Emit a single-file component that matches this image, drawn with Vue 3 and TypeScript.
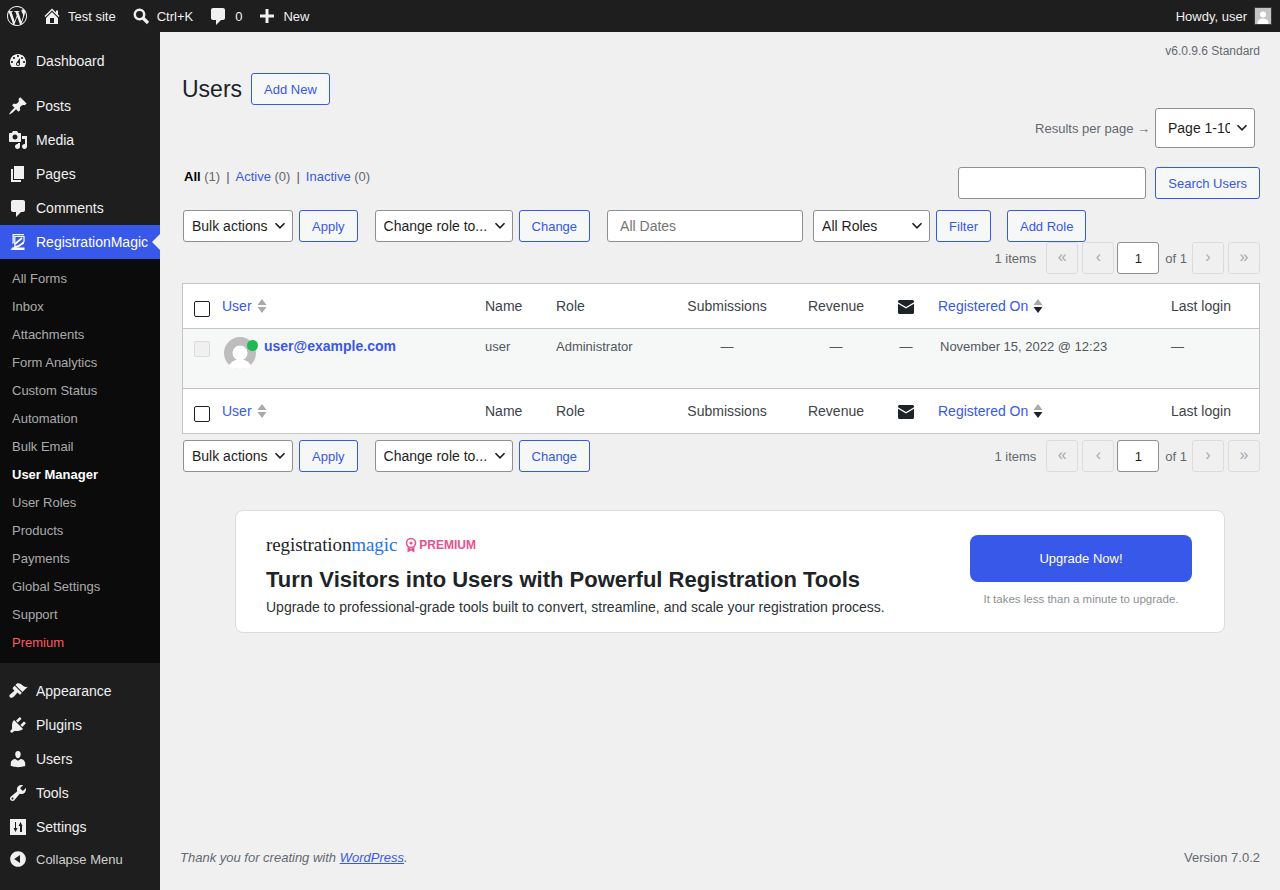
<template>
  <div class="page">
    <header class="adminbar">
      <svg class="wp-logo" viewBox="0 0 24 24"><path :d="icons.wp" /></svg>
      <a class="bar-item home"><svg viewBox="0 0 20 20"><path :d="icons.home" /></svg>Test site</a>
      <a class="bar-item search">
        <svg viewBox="0 0 20 20"><circle cx="8.5" cy="8.5" r="4.7" fill="none" stroke="currentColor" stroke-width="2.5" /><path d="M12 12l5 5" stroke="currentColor" stroke-width="3.2" /></svg>
        Ctrl+K
      </a>
      <a class="bar-item comments"><svg viewBox="0 0 20 20"><path :d="icons.comment" /></svg>0</a>
      <a class="bar-item new"><svg viewBox="0 0 20 20"><path d="M8.5 3h3v5.5H17v3h-5.500V17h-3v-5.500H3v-3h5.500z" /></svg>New</a>
      <div class="howdy">
        Howdy, user
        <span class="bar-avatar"><svg viewBox="0 0 16 16"><rect width="16" height="16" fill="#c4c4c4" /><circle cx="8" cy="6.500" r="3" fill="#fff" /><ellipse cx="8" cy="14.500" rx="5.500" ry="4" fill="#fff" /></svg></span>
      </div>
    </header>

    <div class="body-row">
      <aside class="sidebar">
        <ul class="menu">
          <li v-for="item in menuTop" :key="item.label" class="menu-item" :class="{ spaced: item.spaced }">
            <svg viewBox="0 0 20 20"><path fill-rule="evenodd" :d="item.icon" /></svg>{{ item.label }}
          </li>
          <li class="menu-item active">
            <svg viewBox="0 0 20 20">
              <path d="M4.500 2h11.500v1.300H5.800v7.700L4.500 12.300z" />
              <path d="M6.800 4.500H16v5l-5 4.800H6.800z" fill="none" stroke="#fff" stroke-width="1.200" />
              <path d="M2 17.500l14-7.500v1.800L5.500 17.500z" />
              <path d="M4 15.500h12.500V18H3.500z" />
              <path d="M7 12l7-6" stroke="#fff" stroke-width="1.800" />
            </svg>
            RegistrationMagic
          </li>
          <li class="submenu">
            <a v-for="sub in submenu" :key="sub" :class="{ current: sub === 'User Manager', premium: sub === 'Premium' }">{{ sub }}</a>
          </li>
          <li v-for="item in menuBottom" :key="item.label" class="menu-item" :class="{ spaced: item.spaced }">
            <svg viewBox="0 0 20 20"><path fill-rule="evenodd" :d="item.icon" /></svg>{{ item.label }}
          </li>
          <li class="menu-item collapse">
            <svg viewBox="0 0 20 20"><path fill-rule="evenodd" :d="icons.collapse" /></svg>Collapse Menu
          </li>
        </ul>
      </aside>

      <main class="content">
        <div class="wrap">
          <p class="version">v6.0.9.6 Standard</p>

          <div class="title-row">
            <h1>Users</h1>
            <button class="btn">Add New</button>
          </div>

          <div class="per-page">
            <span>Results per page →</span>
            <select class="field page-select"><option>Page 1-10</option></select>
          </div>

          <div class="filter-row">
            <ul class="subsubsub">
              <li><b>All</b> (1)</li>
              <li class="sep">|</li>
              <li><a>Active</a> (0)</li>
              <li class="sep">|</li>
              <li><a>Inactive</a> (0)</li>
            </ul>
            <div class="search-box">
              <input class="field search-input" type="text" />
              <button class="btn">Search Users</button>
            </div>
          </div>

          <div class="actions top">
            <select class="field bulk"><option>Bulk actions</option></select>
            <button class="btn apply">Apply</button>
            <select class="field role"><option>Change role to...</option></select>
            <button class="btn change">Change</button>
            <input class="field date" type="text" placeholder="All Dates" />
            <select class="field roles"><option>All Roles</option></select>
            <button class="btn filter">Filter</button>
            <button class="btn add-role">Add Role</button>
          </div>

          <div class="pager-row">
            <div class="pager">
              <span class="count">1 items</span>
              <span class="pg first">«</span>
              <span class="pg prev">‹</span>
              <input class="field pg-input" type="text" value="1" />
              <span class="of">of 1</span>
              <span class="pg next">›</span>
              <span class="pg">»</span>
            </div>
          </div>

          <table class="users">
            <colgroup>
              <col style="width: 29px" />
              <col style="width: 263px" />
              <col style="width: 71px" />
              <col style="width: 131px" />
              <col style="width: 100px" />
              <col style="width: 118px" />
              <col style="width: 22px" />
              <col style="width: 244px" />
              <col />
            </colgroup>
            <thead>
              <tr>
                <th class="cb"><input type="checkbox" class="check" /></th>
                <th><a>User</a><svg class="sort" viewBox="0 0 10 16"><path d="M5 1l4.500 6h-9z" fill="#a7aaad" /><path d="M5 15l4.500-6h-9z" fill="#a7aaad" /></svg></th>
                <th>Name</th>
                <th>Role</th>
                <th class="center">Submissions</th>
                <th class="center">Revenue</th>
                <th class="center mail"><svg viewBox="0 0 16 14"><path :d="icons.mail" /></svg></th>
                <th class="reg"><a>Registered On</a><svg class="sort" viewBox="0 0 10 16"><path d="M5 1l4.500 6h-9z" fill="#a7aaad" /><path d="M5 15l4.500-6h-9z" fill="#1d2327" /></svg></th>
                <th>Last login</th>
              </tr>
            </thead>
            <tbody>
              <tr class="user-row">
                <td class="cb"><input type="checkbox" class="check dim" disabled /></td>
                <td class="user-cell">
                  <span class="avatar">
                    <svg viewBox="0 0 32 32"><circle cx="16" cy="16" r="16" fill="#bdbdbd" /><circle cx="16" cy="16" r="7.500" fill="#fff" /><path d="M5 29c2-5 6-6.500 11-6.500S25 24 27 29c-3 2-7 3-11 3s-8-1-11-3z" fill="#fff" /></svg>
                    <i class="online"></i>
                  </span>
                  <a class="email">user@example.com</a>
                </td>
                <td>user</td>
                <td>Administrator</td>
                <td class="center">—</td>
                <td class="center">—</td>
                <td class="center">—</td>
                <td class="reg-date">November 15, 2022 @ 12:23</td>
                <td>—</td>
              </tr>
            </tbody>
            <tfoot>
              <tr>
                <th class="cb"><input type="checkbox" class="check" /></th>
                <th><a>User</a><svg class="sort" viewBox="0 0 10 16"><path d="M5 1l4.500 6h-9z" fill="#a7aaad" /><path d="M5 15l4.500-6h-9z" fill="#a7aaad" /></svg></th>
                <th>Name</th>
                <th>Role</th>
                <th class="center">Submissions</th>
                <th class="center">Revenue</th>
                <th class="center mail"><svg viewBox="0 0 16 14"><path :d="icons.mail" /></svg></th>
                <th class="reg"><a>Registered On</a><svg class="sort" viewBox="0 0 10 16"><path d="M5 1l4.500 6h-9z" fill="#a7aaad" /><path d="M5 15l4.500-6h-9z" fill="#1d2327" /></svg></th>
                <th>Last login</th>
              </tr>
            </tfoot>
          </table>

          <div class="actions bottom">
            <select class="field bulk"><option>Bulk actions</option></select>
            <button class="btn apply">Apply</button>
            <select class="field role"><option>Change role to...</option></select>
            <button class="btn change">Change</button>
            <div class="pager">
              <span class="count">1 items</span>
              <span class="pg first">«</span>
              <span class="pg prev">‹</span>
              <input class="field pg-input" type="text" value="1" />
              <span class="of">of 1</span>
              <span class="pg next">›</span>
              <span class="pg">»</span>
            </div>
          </div>

          <section class="promo">
            <div class="promo-text">
              <div class="brand">
                <span class="wordmark">registration<em>magic</em></span>
                <svg class="ribbon" viewBox="0 0 12 16"><circle cx="6" cy="6" r="4.500" fill="none" stroke="#e8518d" stroke-width="1.600" /><circle cx="6" cy="6" r="1.600" fill="#e8518d" /><path d="M2.500 10v5.500L6 13.500l3.500 2V10L6 12z" fill="#e8518d" /></svg>
                <span class="tier">PREMIUM</span>
              </div>
              <h2>Turn Visitors into Users with Powerful Registration Tools</h2>
              <p>Upgrade to professional-grade tools built to convert, streamline, and scale your registration process.</p>
            </div>
            <div class="promo-cta">
              <button class="upgrade">Upgrade Now!</button>
              <small>It takes less than a minute to upgrade.</small>
            </div>
          </section>
        </div>

        <footer class="foot">
          <span class="thanks">Thank you for creating with <a>WordPress</a>.</span>
          <span>Version 7.0.2</span>
        </footer>
      </main>
    </div>
  </div>
</template>

<script setup lang="ts">
interface MenuItem {
  label: string
  icon: string
  spaced?: boolean
}

const icons = {
  wp: 'M12 2C6.486 2 2 6.486 2 12s4.486 10 10 10 10-4.486 10-10S17.514 2 12 2zM3.009 12c0-1.303.28-2.54.778-3.658l4.287 11.745A8.993 8.993 0 013.009 12zm8.991 8.991c-.883 0-1.735-.13-2.54-.367l2.698-7.84 2.763 7.572c.018.044.04.085.064.124a8.95 8.95 0 01-2.985.511zm1.24-13.207c.541-.028 1.029-.085 1.029-.085.484-.057.427-.769-.057-.741 0 0-1.456.114-2.396.114-.883 0-2.368-.114-2.368-.114-.485-.028-.541.712-.057.741 0 0 .459.057.943.085l1.4 3.838-1.968 5.9-3.274-9.738c.542-.028 1.029-.085 1.029-.085.484-.057.427-.769-.057-.741 0 0-1.456.114-2.396.114-.169 0-.368-.004-.58-.011A8.98 8.98 0 0112 3.009c2.341 0 4.472.895 6.071 2.36-.039-.002-.076-.007-.117-.007-.883 0-1.51.769-1.51 1.596 0 .741.427 1.368.883 2.109.342.599.741 1.368.741 2.479 0 .769-.296 1.662-.684 2.905l-.897 2.996-3.247-9.663zm3.279 11.985l2.745-7.936c.513-1.282.684-2.307.684-3.219 0-.331-.022-.638-.061-.924A8.96 8.96 0 0120.991 12a8.987 8.987 0 01-4.472 7.769z',
  home: 'M16 8.500l1.530 1.530-1.060 1.060L10 4.620l-6.470 6.470-1.060-1.060L10 2.500l4 4v-2h2v4zm-6-2.460l6 5.990V18H4v-5.970zM12 17v-5H8v5h4z',
  comment: 'M5 2h10c1.100 0 2 .9 2 2v8c0 1.100-.9 2-2 2h-2l-5 5v-5H5c-1.100 0-2-.9-2-2V4c0-1.100.9-2 2-2z',
  collapse: 'M10 2.160c4.330 0 7.840 3.510 7.840 7.840s-3.510 7.840-7.840 7.840S2.160 14.330 2.160 10 5.710 2.160 10 2.160zm2 11.720V6.120L6.180 9.970z',
  mail: 'M1.500 0h13c.8 0 1.500.7 1.500 1.500v.8L8 7 0 2.300v-.8C0 .7.700 0 1.500 0zM0 3.800l8 4.700 8-4.700v8.700c0 .8-.7 1.500-1.500 1.500h-13C.7 14 0 13.300 0 12.500z',
}

const menuTop: MenuItem[] = [
  { label: 'Dashboard', icon: 'M3.760 16h12.480c1.100-1.370 1.760-3.110 1.760-5 0-4.420-3.580-8-8-8s-8 3.580-8 8c0 1.890.660 3.630 1.760 5zM10 4c.550 0 1 .450 1 1s-.450 1-1 1-1-.450-1-1 .450-1 1-1zM6 6c.550 0 1 .450 1 1s-.450 1-1 1-1-.450-1-1 .450-1 1-1zm8 0c.550 0 1 .450 1 1s-.450 1-1 1-1-.450-1-1 .450-1 1-1zm-5.370 5.550L12 7v6c0 1.100-.9 2-2 2s-2-.9-2-2c0-.570.240-1.080.630-1.450zM4 10c.550 0 1 .450 1 1s-.450 1-1 1-1-.450-1-1 .450-1 1-1zm12 0c.550 0 1 .450 1 1s-.450 1-1 1-1-.450-1-1 .450-1 1-1zm-5 3c0-.550-.450-1-1-1s-1 .450-1 1 .450 1 1 1 1-.450 1-1z' },
  { label: 'Posts', spaced: true, icon: 'M10.440 3.020l1.820-1.820 6.360 6.350-1.830 1.820c-1.050-.680-2.480-.570-3.410.360l-.750.750c-.920.930-1.040 2.350-.350 3.410l-1.830 1.820-2.410-2.410-2.800 2.790c-.420.420-3.380 2.710-3.800 2.290s1.860-3.390 2.280-3.810l2.790-2.790L4.100 9.360l1.830-1.820c1.050.690 2.480.570 3.400-.360l.750-.750c.930-.920 1.050-2.350.360-3.410z' },
  { label: 'Media', icon: 'M13 11V4c0-.550-.450-1-1-1h-1.670L9 1H5L3.670 3H2c-.550 0-1 .450-1 1v7c0 .550.450 1 1 1h10c.550 0 1-.450 1-1zM7 4.500c1.380 0 2.500 1.120 2.500 2.500S8.380 9.500 7 9.500 4.500 8.380 4.500 7 5.620 4.500 7 4.500zM14 6h5v10.500c0 1.380-1.120 2.500-2.500 2.500S14 17.880 14 16.500s1.120-2.500 2.500-2.500c.170 0 .340.020.500.050V9h-3V6zm-4 8.050V13h2v3.500c0 1.380-1.120 2.500-2.500 2.500S7 17.880 7 16.500 8.120 14 9.500 14c.170 0 .340.020.500.050z' },
  { label: 'Pages', icon: 'M6 15V2h10v13H6zm-1 1h8v2H3V5h2v11z' },
  { label: 'Comments', icon: 'M5 2h10c1.100 0 2 .9 2 2v8c0 1.100-.9 2-2 2h-2l-5 5v-5H5c-1.100 0-2-.9-2-2V4c0-1.100.9-2 2-2z' },
]

const submenu: string[] = [
  'All Forms', 'Inbox', 'Attachments', 'Form Analytics', 'Custom Status', 'Automation', 'Bulk Email',
  'User Manager', 'User Roles', 'Products', 'Payments', 'Global Settings', 'Support', 'Premium',
]

const menuBottom: MenuItem[] = [
  { label: 'Appearance', spaced: true, icon: 'M14.480 11.060L7.410 3.990l1.500-1.500c.500-.560 2.300-.470 3.510.320 1.210.800 1.430 1.280 2.910 2.100 1.180.640 2.450 1.260 4.450.850zm-.710.710L6.700 4.700 4.930 6.470c-.390.390-.390 1.020 0 1.410l1.060 1.060c.390.390.390 1.030 0 1.420-.6.600-1.430 1.110-2.210 1.690-.350.260-.7.530-1.010.840C1.430 13.230.780 15.060 1.950 16.230c1.180 1.170 3 .520 4.340-.880.310-.310.580-.660.840-1.010.580-.780 1.090-1.610 1.690-2.210.390-.390 1.020-.390 1.410 0l1.060 1.060c.390.390 1.020.390 1.410 0z' },
  { label: 'Plugins', icon: 'M13.110 4.360L9.870 7.600 8 5.730l3.240-3.240c.350-.340 1.050-.2 1.560.320.520.510.660 1.210.310 1.550zm-8 1.770l.910-1.120 9.010 9.010-1.190.840c-.710.710-2.630 1.160-3.820 1.160H6.140L4.900 17.260c-.590.590-1.540.590-2.120 0-.590-.580-.590-1.530 0-2.120l1.240-1.240v-3.880c0-1.130.400-3.190 1.090-3.890zm7.260 3.970l3.240-3.240c.340-.350 1.040-.210 1.550.310.520.510.660 1.210.310 1.550l-3.240 3.250z' },
  { label: 'Users', icon: 'M10 9.250c-2.270 0-2.730-3.440-2.730-3.440C7 4.020 7.820 2 9.970 2c2.160 0 2.980 2.020 2.710 3.810 0 0-.410 3.440-2.680 3.440zm0 2.570L12.720 10c2.390 0 4.520 2.330 4.520 4.530v2.490s-3.650 1.130-7.240 1.130c-3.650 0-7.240-1.130-7.240-1.130v-2.490c0-2.250 1.940-4.480 4.470-4.480z' },
  { label: 'Tools', icon: 'M16.680 9.770c-1.340 1.340-3.300 1.670-4.950.990l-5.410 6.520c-.990.990-2.590.990-3.580 0s-.990-2.590 0-3.570l6.520-5.420c-.680-1.650-.350-3.610.990-4.950 1.280-1.280 3.120-1.620 4.720-1.060l-2.890 2.890 2.820 2.820 2.860-2.870c.530 1.580.180 3.390-1.080 4.650zM3.810 16.210c.400.390 1.040.390 1.430 0 .400-.400.400-1.040 0-1.430-.390-.400-1.030-.400-1.430 0-.390.390-.390 1.030 0 1.430z' },
  { label: 'Settings', icon: 'M2 2h16v16H2zM7 5v6H5.500L7.500 15l2-4H8V5zm5 10V9h-1.500l2-4 2 4H14v6z' },
]
</script>

<style>
html,
body {
  margin: 0;
  background: #f0f0f1;
  overflow: hidden;
}
</style>

<style scoped>
.page {
  width: 1280px;
  height: 890px;
  display: flex;
  flex-direction: column;
  font-family: "Liberation Sans", Arial, sans-serif;
  font-size: 13px;
  color: #3c434a;
}

.adminbar {
  height: 32px;
  flex-shrink: 0;
  background: #1e1e1e;
  color: #f0f0f1;
  display: flex;
  align-items: center;
  padding: 0 9px 0 7px;
}

.adminbar svg {
  fill: currentColor;
}

.wp-logo {
  width: 24px;
  height: 24px;
  margin-left: -2px;
  color: #f0f0f1;
}

.bar-item {
  display: flex;
  align-items: center;
  white-space: nowrap;
}

.bar-item svg {
  width: 20px;
  height: 20px;
}

.home {
  margin-left: 13px;
  gap: 6px;
}

.search {
  margin-left: 15px;
  gap: 6px;
}

.comments {
  margin-left: 15px;
  gap: 7px;
}

.new {
  margin-left: 15px;
  gap: 6px;
}

.howdy {
  margin-left: auto;
  display: flex;
  align-items: center;
  gap: 7px;
}

.bar-avatar {
  width: 16px;
  height: 16px;
  border: 1px solid #3c3c3c;
  display: block;
  margin-right: -1px;
}

.bar-avatar svg {
  display: block;
}

.body-row {
  flex: 1;
  display: flex;
  min-height: 0;
}

.sidebar {
  width: 160px;
  flex-shrink: 0;
  background: #1e1e1e;
}

.menu {
  list-style: none;
  margin: 12px 0 0;
  padding: 0;
}

.menu-item {
  height: 34px;
  display: flex;
  align-items: center;
  padding-left: 8px;
  gap: 8px;
  font-size: 14px;
  color: #f0f0f1;
  white-space: nowrap;
}

.menu-item svg {
  width: 20px;
  height: 20px;
  flex-shrink: 0;
  fill: #f0f0f1;
}

.menu-item.spaced {
  margin-top: 11px;
}

.menu-item.active {
  position: relative;
  background: #3858e9;
  color: #fff;
}

.menu-item.active svg {
  fill: #fff;
}

.menu-item.active::after {
  content: "";
  position: absolute;
  right: 0;
  top: 9px;
  border: 8px solid transparent;
  border-right-color: #f0f0f1;
  border-left-width: 0;
}

.submenu {
  background: #0b0b0b;
  padding: 5px 0 7px;
}

.submenu a {
  display: flex;
  align-items: center;
  height: 28px;
  padding-left: 12px;
  color: rgba(240, 240, 241, 0.7);
}

.submenu a.current {
  color: #fff;
  font-weight: 700;
}

.submenu a.premium {
  color: #ff5a5f;
}

.menu-item.collapse {
  height: 30px;
  margin-top: 0;
  font-size: 13px;
  color: #d0d0d0;
  padding-top: 0;
}

.content {
  flex: 1;
  min-width: 0;
  display: flex;
  flex-direction: column;
  padding: 0 20px 0 20px;
}

.wrap {
  margin-left: 2px;
  flex: 1;
}

.version {
  margin: 12px 0 0;
  text-align: right;
  font-size: 12px;
  line-height: 14px;
  color: #646970;
}

.title-row {
  margin-top: 15px;
  height: 32px;
  display: flex;
  align-items: center;
  gap: 9px;
}

h1 {
  margin: 0;
  font-size: 23px;
  font-weight: 400;
  color: #1d2327;
  line-height: 30px;
}

.btn {
  height: 32px;
  padding: 0 12px;
  font: inherit;
  font-size: 13px;
  color: #3858e9;
  background: #f6f7f7;
  border: 1px solid #3858e9;
  border-radius: 3px;
  white-space: nowrap;
}

.field {
  font: inherit;
  font-size: 14px;
  height: 32px;
  box-sizing: border-box;
  color: #1e1e1e;
  background-color: #fff;
  border: 1px solid #8c8f94;
  border-radius: 3px;
  outline: none;
}

select.field {
  appearance: none;
  padding: 0 24px 0 8px;
  background-image: url("data:image/svg+xml,%3Csvg xmlns='http://www.w3.org/2000/svg' viewBox='0 0 20 20'%3E%3Cpath d='M5 7l5 5 5-5' fill='none' stroke='%231e1e1e' stroke-width='1.800'/%3E%3C/svg%3E");
  background-repeat: no-repeat;
  background-position: right 3px center;
  background-size: 18px 18px;
}

.per-page {
  margin-top: 3px;
  padding-right: 5px;
  height: 40px;
  display: flex;
  justify-content: flex-end;
  align-items: center;
  gap: 5px;
  color: #646970;
}

select.page-select {
  width: 100px;
  height: 40px;
  padding-left: 12px;
}

.filter-row {
  margin-top: 19px;
  display: flex;
  justify-content: space-between;
  align-items: flex-start;
}

.subsubsub {
  list-style: none;
  display: flex;
  margin: 2px 0 0 2px;
  padding: 0;
  gap: 6px;
  color: #646970;
  line-height: 16px;
}

.subsubsub b {
  color: #000;
}

.subsubsub a {
  color: #3858e9;
}

.subsubsub .sep {
  color: #50575e;
}

.search-box {
  display: flex;
  gap: 9px;
}

.search-input {
  width: 188px;
}

.actions {
  display: flex;
  margin-left: 1px;
}

.actions.top {
  margin-top: 11px;
}

.actions.bottom {
  margin-top: 6px;
  align-items: center;
}

.bulk {
  width: 110px;
}

.apply {
  margin-left: 6px;
}

.role {
  width: 138px;
  margin-left: 17px;
}

.change {
  margin-left: 6px;
}

input.date {
  width: 196px;
  margin-left: 17px;
  padding: 0 12px;
}

.date::placeholder {
  color: #757575;
  opacity: 1;
}

select.roles {
  width: 117px;
  margin-left: 10px;
}

.filter {
  margin-left: 6px;
}

.add-role {
  margin-left: 16px;
}

.pager-row {
  height: 32px;
  display: flex;
  justify-content: flex-end;
}

.pager {
  display: flex;
  align-items: center;
  margin-left: auto;
  color: #646970;
}

.count {
  margin-right: 10px;
}

.pg {
  width: 32px;
  height: 32px;
  box-sizing: border-box;
  display: flex;
  align-items: center;
  justify-content: center;
  border: 1px solid #dcdcde;
  border-radius: 3px;
  color: #a7aaad;
  font-size: 16px;
  padding-bottom: 2px;
  background: #f0f0f1;
}

.first {
  margin-right: 4px;
}

.prev {
  margin-right: 3px;
}

.next {
  margin-right: 4px;
}

.pg-input {
  width: 42px;
  text-align: center;
  font-size: 13px;
  padding: 0;
}

.of {
  margin: 0 5px 0 6px;
}

.users {
  margin-top: 9px;
  width: 1078px;
  table-layout: fixed;
  border-collapse: separate;
  border-spacing: 0;
  background: #fff;
  border: 1px solid #c3c4c7;
}

.users th {
  height: 44px;
  padding: 0 10px;
  font-size: 14px;
  font-weight: 400;
  text-align: left;
  color: #3c434a;
  white-space: nowrap;
}

thead th {
  border-bottom: 1px solid #c3c4c7;
}

tfoot th {
  border-top: 1px solid #c3c4c7;
}

.users a {
  color: #3858e9;
}

.users .center {
  text-align: center;
  padding: 0;
}

.users td {
  height: 59px;
  padding: 10px 10px 0;
  box-sizing: border-box;
  vertical-align: top;
  background: #f6f7f7;
  color: #50575e;
  line-height: 16px;
  white-space: nowrap;
}

.users td.center {
  padding: 10px 0 0;
}

.users .cb {
  padding: 0 0 0 11px;
  vertical-align: middle;
}

.users td.cb {
  padding-top: 12px;
  vertical-align: top;
}

.check {
  appearance: none;
  display: block;
  margin: 5px 0 0;
  width: 16px;
  height: 16px;
  background: #fff;
  border: 1px solid #1e1e1e;
  border-radius: 2px;
  box-sizing: border-box;
}

.check.dim {
  margin: 0;
  background: #f0f0f1;
  border-color: #dcdcde;
}

.sort {
  width: 10px;
  height: 16px;
  margin-left: 5px;
  vertical-align: -3px;
}

.mail svg {
  width: 16px;
  height: 14px;
  fill: #1d2327;
  vertical-align: middle;
}

.users th.reg {
  padding-left: 21px;
}

.users td.reg-date {
  padding-left: 23px;
}

.users td.user-cell {
  padding-left: 12px;
  padding-top: 8px;
}

.user-cell {
  position: relative;
}

.avatar {
  display: inline-block;
  position: relative;
  width: 32px;
  height: 32px;
  vertical-align: top;
  margin-right: 8px;
}

.avatar svg {
  display: block;
}

.online {
  position: absolute;
  top: 3px;
  right: -2px;
  width: 11px;
  height: 11px;
  border-radius: 50%;
  background: #1db954;
}

.email {
  font-size: 14px;
  font-weight: 700;
  line-height: 18px;
}

.promo {
  margin: 38px 0 0 53px;
  width: 990px;
  height: 123px;
  box-sizing: border-box;
  display: flex;
  justify-content: space-between;
  padding: 24px 32px 0 30px;
  background: #fff;
  border: 1px solid #dcdcde;
  border-radius: 8px;
}

.brand {
  display: flex;
  align-items: center;
  height: 20px;
}

.wordmark {
  font-family: "Liberation Serif", serif;
  font-size: 19px;
  color: #1d2327;
  letter-spacing: -0.1px;
}

.wordmark em {
  font-style: normal;
  color: #2271f1;
}

.ribbon {
  width: 12px;
  height: 16px;
  margin: 0 2px 0 8px;
}

.tier {
  font-size: 12px;
  font-weight: 700;
  color: #e8518d;
}

h2 {
  margin: 12px 0 0;
  font-size: 22px;
  line-height: 26px;
  font-weight: 700;
  color: #1d2327;
}

.promo-text p {
  margin: 6px 0 0;
  font-size: 14px;
  line-height: 16px;
  color: #2c3338;
}

.promo-cta {
  width: 222px;
  display: flex;
  flex-direction: column;
  align-items: center;
}

.upgrade {
  width: 222px;
  height: 47px;
  font: inherit;
  color: #fff;
  background: #3858e9;
  border: 0;
  border-radius: 8px;
}

.promo-cta small {
  margin-top: 11px;
  font-size: 11.500px;
  color: #8c8f94;
}

.foot {
  height: 40px;
  display: flex;
  justify-content: space-between;
  align-items: flex-start;
  color: #646970;
  line-height: 16px;
}

.thanks {
  font-style: italic;
}

.foot a {
  color: #3858e9;
  text-decoration: underline;
}
</style>
